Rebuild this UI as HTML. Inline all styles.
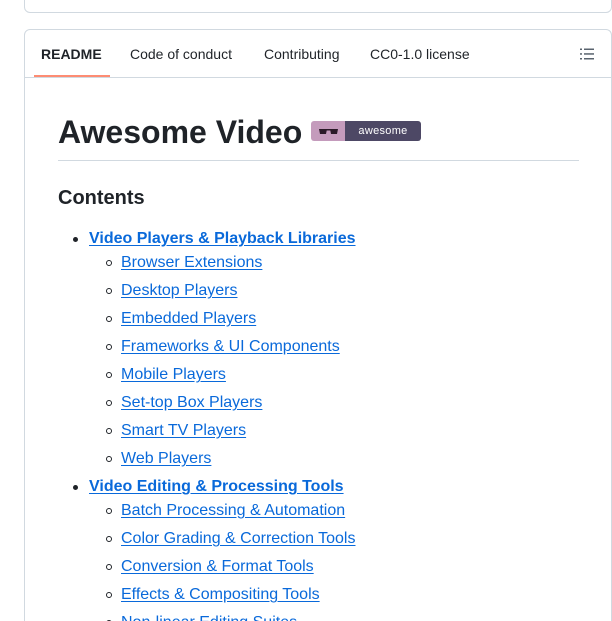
<!DOCTYPE html>
<html style="overflow:hidden;height:621px"><head><meta charset="utf-8"><style>
body{margin:0;background:#fff;font-family:"Liberation Sans",Arial,sans-serif;color:#1f2328;width:612px;height:621px;overflow:hidden;position:relative}
.c1{position:absolute;left:24px;top:-10px;width:586px;height:21px;border:1px solid #d1d9e0;border-radius:6px}
.c2{position:absolute;left:24px;top:29px;width:586px;height:620px;border:1px solid #d1d9e0;border-radius:6px}
.tabs{height:47px;border-bottom:1px solid #d1d9e0;position:relative;font-size:14px}
.tabs span{position:absolute;top:16px}
.ul{position:absolute;left:9px;top:45px;width:76px;height:2px;background:#fd8c73}
h1{position:absolute;left:33px;top:82px;margin:0;font-size:32px;font-weight:700;line-height:40px}
.hr{position:absolute;left:33px;top:130px;width:521px;height:1px;background:#d1d9e0}
h2{position:absolute;left:33px;top:155px;margin:0;font-size:20px;line-height:26px}
a{color:#0969da;text-decoration:underline;text-underline-offset:2px}
.li{position:absolute;font-size:16px;line-height:20px;white-space:nowrap}
.b{font-weight:700}
.dot{position:absolute;width:5px;height:5px;border-radius:50%;background:#1f2328}
.cir{position:absolute;width:4px;height:4px;border-radius:50%;border:1px solid #1f2328}
</style></head><body>
<div class="c1"></div>
<div class="c2">
<div class="tabs">
<span style="left:16px;font-weight:700">README</span>
<span style="left:105px">Code of conduct</span>
<span style="left:239px">Contributing</span>
<span style="left:345px">CC0-1.0 license</span>
<svg style="position:absolute;left:554px;top:16px" width="16" height="16" viewBox="0 0 16 16" fill="#59636e"><rect x="1" y="2.5" width="2" height="1.5"/><rect x="5" y="2.5" width="10" height="1.5"/><rect x="1" y="7.2" width="2" height="1.5"/><rect x="5" y="7.2" width="10" height="1.5"/><rect x="1" y="12" width="2" height="1.5"/><rect x="5" y="12" width="10" height="1.5"/></svg>
<div class="ul"></div>
</div>
<h1>Awesome Video</h1>
<div style="position:absolute;left:286px;top:91px;width:110px;height:20px;border-radius:3px;overflow:hidden;display:flex">
<div style="width:34px;background:#c49bbc;position:relative"><svg style="position:absolute;left:7px;top:5px" width="21" height="10" viewBox="0 0 21 10"><path d="M1 3h8l-1 5h-6zM12 3h8l-1 5h-6z" fill="#2a1a28"/><rect x="8" y="3" width="5" height="1.5" fill="#2a1a28"/></svg></div>
<div style="flex:1;background:#4d4865;color:#fff;font-size:11px;line-height:20px;text-align:center;letter-spacing:.3px">awesome</div>
</div>
<div class="hr"></div>
<h2>Contents</h2>
</div>
<div class="dot" style="left:73px;top:237px"></div><div class="li b" style="left:89px;top:229px"><a>Video Players &amp; Playback Libraries</a></div>
<div class="cir" style="left:106px;top:260px"></div><div class="li" style="left:121px;top:253px"><a>Browser Extensions</a></div>
<div class="cir" style="left:106px;top:288px"></div><div class="li" style="left:121px;top:281px"><a>Desktop Players</a></div>
<div class="cir" style="left:106px;top:316px"></div><div class="li" style="left:121px;top:309px"><a>Embedded Players</a></div>
<div class="cir" style="left:106px;top:344px"></div><div class="li" style="left:121px;top:337px"><a>Frameworks &amp; UI Components</a></div>
<div class="cir" style="left:106px;top:372px"></div><div class="li" style="left:121px;top:365px"><a>Mobile Players</a></div>
<div class="cir" style="left:106px;top:400px"></div><div class="li" style="left:121px;top:393px"><a>Set-top Box Players</a></div>
<div class="cir" style="left:106px;top:428px"></div><div class="li" style="left:121px;top:421px"><a>Smart TV Players</a></div>
<div class="cir" style="left:106px;top:456px"></div><div class="li" style="left:121px;top:449px"><a>Web Players</a></div>
<div class="dot" style="left:73px;top:485px"></div><div class="li b" style="left:89px;top:477px"><a>Video Editing &amp; Processing Tools</a></div>
<div class="cir" style="left:106px;top:508px"></div><div class="li" style="left:121px;top:501px"><a>Batch Processing &amp; Automation</a></div>
<div class="cir" style="left:106px;top:536px"></div><div class="li" style="left:121px;top:529px"><a>Color Grading &amp; Correction Tools</a></div>
<div class="cir" style="left:106px;top:564px"></div><div class="li" style="left:121px;top:557px"><a>Conversion &amp; Format Tools</a></div>
<div class="cir" style="left:106px;top:592px"></div><div class="li" style="left:121px;top:585px"><a>Effects &amp; Compositing Tools</a></div>
<div class="cir" style="left:106px;top:620px"></div><div class="li" style="left:121px;top:613px"><a>Non-linear Editing Suites</a></div>
</body></html>
